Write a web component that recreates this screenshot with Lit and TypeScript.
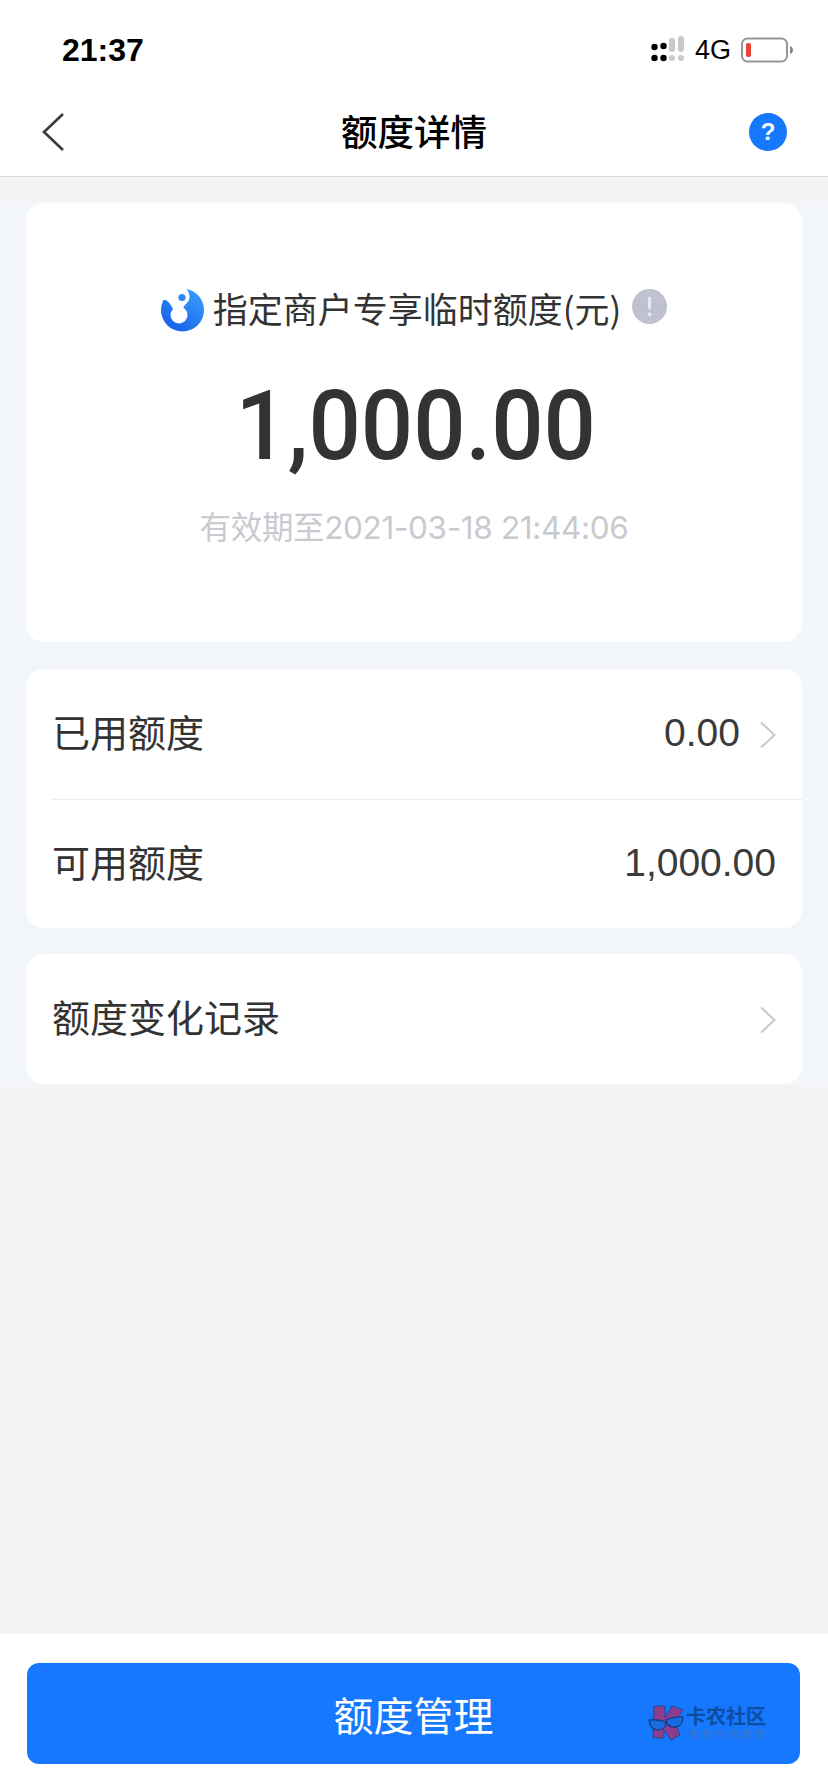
import { LitElement, html, css, svg } from 'lit';
import { customElement } from 'lit/decorators.js';

const chevron = svg`<svg class="chev" width="18" height="28" viewBox="0 0 18 28"><path d="M3 1.5 L16.5 14 L3 26.5" fill="none" stroke="#c9c9c9" stroke-width="2"/></svg>`;

@customElement('app-root')
export class AppRoot extends LitElement {
  static styles = css`
    :host {
      display: block;
      width: 828px;
      height: 1792px;
      background: #f4f4f5;
      font-family: "Noto Sans CJK SC", "Liberation Sans", sans-serif;
      color: #333;
    }

    .page {
      display: flex;
      flex-direction: column;
      height: 1792px;
    }

    /* status bar */
    .status {
      height: 88px;
      flex: none;
      background: #fff;
      display: flex;
      align-items: center;
      justify-content: space-between;
      padding: 12px 34px 0 62px;
      box-sizing: border-box;
    }

    .time {
      font: 700 32px "Liberation Sans", sans-serif;
      color: #000;
    }

    .status-right {
      display: flex;
      align-items: center;
      gap: 10px;
    }

    .net {
      font: 400 27px "Liberation Sans", sans-serif;
      color: #000;
    }

    /* nav */
    .nav {
      height: 88px;
      flex: none;
      background: #fff;
      border-bottom: 1px solid #dcdcdc;
      display: flex;
      align-items: center;
      justify-content: space-between;
      padding: 0 41px;
    }

    .nav-side {
      width: 38px;
      display: flex;
    }

    .nav-title {
      font-size: 36.5px;
      font-weight: 500;
      color: #000;
      margin-bottom: 4px;
    }

    .help {
      width: 38px;
      height: 38px;
      border-radius: 50%;
      background: #1677ff;
      color: #fff;
      font: 700 24px "Liberation Sans", sans-serif;
      display: flex;
      align-items: center;
      justify-content: center;
    }

    /* content */
    .content {
      flex: 1;
      padding-top: 26px;
    }

    .cards {
      background: #f2f5fa;
      display: flex;
      flex-direction: column;
      gap: 26px;
      padding: 0 26px;
    }

    .card {
      background: #fff;
      border-radius: 18px;
    }

    .hero {
      height: 439px;
      margin-bottom: 1px;
      box-sizing: border-box;
      padding-top: 82px;
      display: flex;
      flex-direction: column;
      align-items: center;
    }

    .hero-label {
      display: flex;
      align-items: center;
      height: 44px;
      font-size: 35px;
      color: #333;
    }

    .hero-label .logo {
      margin-right: 9px;
      margin-top: 5px;
    }

    .hero-label .info {
      margin-left: 11px;
      margin-top: -2px;
    }

    .amount {
      margin: 47px 0 0 4px;
      font: 500 97px/100px Roboto, "Liberation Sans", sans-serif;
      color: #333;
      transform: scaleX(0.95);
    }

    .expire {
      margin-top: 30px;
      font-family: Inter, "Noto Sans CJK SC", sans-serif;
      font-size: 31.5px;
      letter-spacing: -0.35px;
      line-height: 44px;
      color: #c8cad0;
    }

    .row {
      height: 130px;
      display: flex;
      align-items: center;
      justify-content: space-between;
      padding: 0 26px;
      font-size: 38px;
      color: #333;
    }

    .row.short {
      height: 128px;
    }

    .label {
      padding-bottom: 8px;
    }

    .divider {
      height: 1px;
      background: #ececec;
      margin-left: 26px;
    }

    .val {
      font: 400 39px "Liberation Sans", sans-serif;
      color: #3a3a3a;
      display: flex;
      align-items: center;
      padding-bottom: 2px;
    }

    .chev {
      margin-left: 18px;
      display: block;
      margin-top: 4px;
    }

    /* footer */
    .footer {
      height: 158px;
      flex: none;
      background: #fff;
      box-sizing: border-box;
      padding: 29px 28px 0 27px;
    }

    .btn {
      position: relative;
      height: 101px;
      border-radius: 12px;
      background: #1677ff;
      color: #fff;
      font-size: 40px;
      display: flex;
      align-items: center;
      justify-content: center;
    }

    .watermark {
      position: absolute;
      left: 621px;
      top: 42px;
      display: flex;
      gap: 2px;
    }

    .wm-text {
      display: flex;
      flex-direction: column;
      margin-top: 1px;
    }

    .wm-top {
      font-size: 20px;
      line-height: 20px;
      font-weight: 700;
      color: #0e4c9f;
    }

    .wm-sub {
      font-size: 10px;
      line-height: 11px;
      color: #3f76c4;
      letter-spacing: 3.2px;
      margin: 2px 0 0 3px;
      white-space: nowrap;
    }
  `;

  render() {
    return html`
      <div class="page">
        <div class="status">
          <span class="time">21:37</span>
          <div class="status-right">
            <svg width="34" height="28" viewBox="0 0 34 28">
              <circle cx="3.5" cy="11" r="3.2" fill="#000"/>
              <circle cx="3.5" cy="22" r="3.2" fill="#000"/>
              <circle cx="12.5" cy="10" r="3.2" fill="#000"/>
              <circle cx="12.5" cy="22" r="3.2" fill="#000"/>
              <rect x="18" y="2" width="6" height="14" rx="3" fill="#c9c9c9"/>
              <rect x="18" y="19" width="6" height="6" rx="3" fill="#c9c9c9"/>
              <rect x="27" y="0" width="6" height="16" rx="3" fill="#c9c9c9"/>
              <rect x="27" y="19" width="6" height="6" rx="3" fill="#c9c9c9"/>
            </svg>
            <span class="net">4G</span>
            <svg width="53" height="26" viewBox="0 0 53 26">
              <rect x="1" y="1.5" width="45" height="23" rx="5.5" fill="#fff" stroke="#979797" stroke-width="2"/>
              <rect x="5" y="6" width="5" height="14" rx="2" fill="#e8413a"/>
              <path d="M49 9 Q52 10 52 13 Q52 16 49 17 Z" fill="#8a8a8a"/>
            </svg>
          </div>
        </div>
        <div class="nav">
          <div class="nav-side">
            <svg width="24" height="40" viewBox="0 0 24 40">
              <path d="M22 2 L3 20 L22 38" fill="none" stroke="#3a3a3a" stroke-width="2.6"/>
            </svg>
          </div>
          <span class="nav-title">额度详情</span>
          <span class="help">?</span>
        </div>
        <div class="content">
          <div class="cards">
            <div class="card hero">
              <div class="hero-label">
                <svg class="logo" width="43" height="44" viewBox="0 0 43 44">
                  <defs>
                    <linearGradient id="lg" x1="0.2" y1="1" x2="0.9" y2="0">
                      <stop offset="0" stop-color="#1560e8"/>
                      <stop offset="1" stop-color="#3aa0ff"/>
                    </linearGradient>
                  </defs>
                  <circle cx="21.5" cy="22" r="21.5" fill="url(#lg)"/>
                  <path d="M0 0 H25 C29 5 30 11 26 15 C24 17 23 18 22 20 L12 21 C10 17 8 14 5 12 L0 12 Z" fill="#fff"/>
                  <circle cx="18" cy="27" r="8.5" fill="#fff"/>
                  <circle cx="21" cy="9.5" r="3.6" fill="#2a86f3"/>
                </svg>
                <span>指定商户专享临时额度(元)</span>
                <svg class="info" width="35" height="35" viewBox="0 0 36 36">
                  <circle cx="18" cy="18" r="18" fill="#bfc1d0"/>
                  <rect x="16.4" y="8" width="3.2" height="13" rx="1.4" fill="#e9e9f0"/>
                  <circle cx="18" cy="26" r="2" fill="#e9e9f0"/>
                </svg>
              </div>
              <div class="amount">1,000.00</div>
              <div class="expire">有效期至2021-03-18 21:44:06</div>
            </div>
            <div class="card">
              <div class="row">
                <span class="label">已用额度</span>
                <span class="val">0.00 ${chevron}</span>
              </div>
              <div class="divider"></div>
              <div class="row short">
                <span class="label">可用额度</span>
                <span class="val">1,000.00</span>
              </div>
            </div>
            <div class="card">
              <div class="row">
                <span class="label">额度变化记录</span>
                <span class="val">${chevron}</span>
              </div>
            </div>
          </div>
        </div>
        <div class="footer">
          <div class="btn">
            <span>额度管理</span>
            <div class="watermark">
              <svg width="36" height="35" viewBox="0 0 36 35">
                <path d="M6 1 H17 V13 L24 1 L35 5 L27 17 L32 30 L23 35 L16 25 V33 H5 Z" fill="#8c3d8e" stroke="#1c4a94" stroke-width="1"/>
                <path d="M1 15 Q10 14 18 17 Q18 25 10 25 Q2 25 1 15 Z" fill="#1a6bdf" stroke="#123f86" stroke-width="1.3"/>
                <path d="M18 15 Q26 11 35 12 Q35 21 27 22 Q20 23 18 15 Z" fill="#1a6bdf" stroke="#123f86" stroke-width="1.3"/>
              </svg>
              <div class="wm-text">
                <span class="wm-top">卡农社区</span>
                <span class="wm-sub">金融在线教育</span>
              </div>
            </div>
          </div>
        </div>
      </div>
    `;
  }
}
